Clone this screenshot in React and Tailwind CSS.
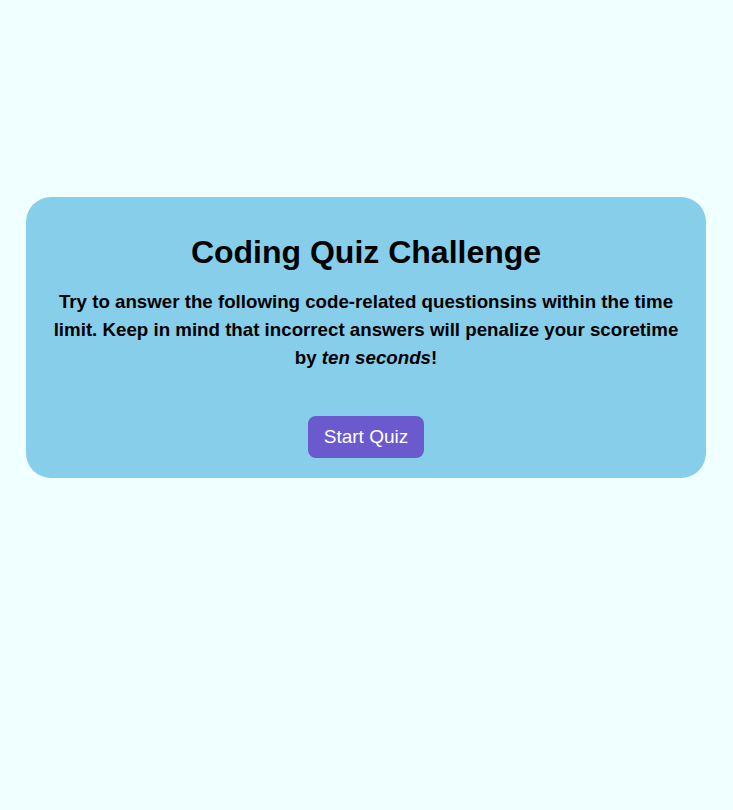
export default function App() {
  return (
    <main className="min-h-[810px] bg-[#f0ffff] pt-[197px] font-['Liberation_Sans',Arial,sans-serif] text-black">
      <section className="ml-[26px] flex w-[680px] flex-col items-center rounded-[25px] bg-[#87ceeb] px-[26px] pb-[20px] pt-[37px] text-center">
        <h1 className="text-[32px] font-bold leading-[37px]">Coding Quiz Challenge</h1>
        <p className="mt-[17px] text-[18.72px] font-bold leading-[28px]">
          Try to answer the following code-related questionsins within the time limit. Keep in mind that incorrect
          answers will penalize your scoretime by <em>ten seconds</em>!
        </p>
        <button className="mt-[44px] h-[42px] w-[116px] rounded-[8px] bg-[#6a5acd] text-[19px] text-white">
          Start Quiz
        </button>
      </section>
    </main>
  );
}
